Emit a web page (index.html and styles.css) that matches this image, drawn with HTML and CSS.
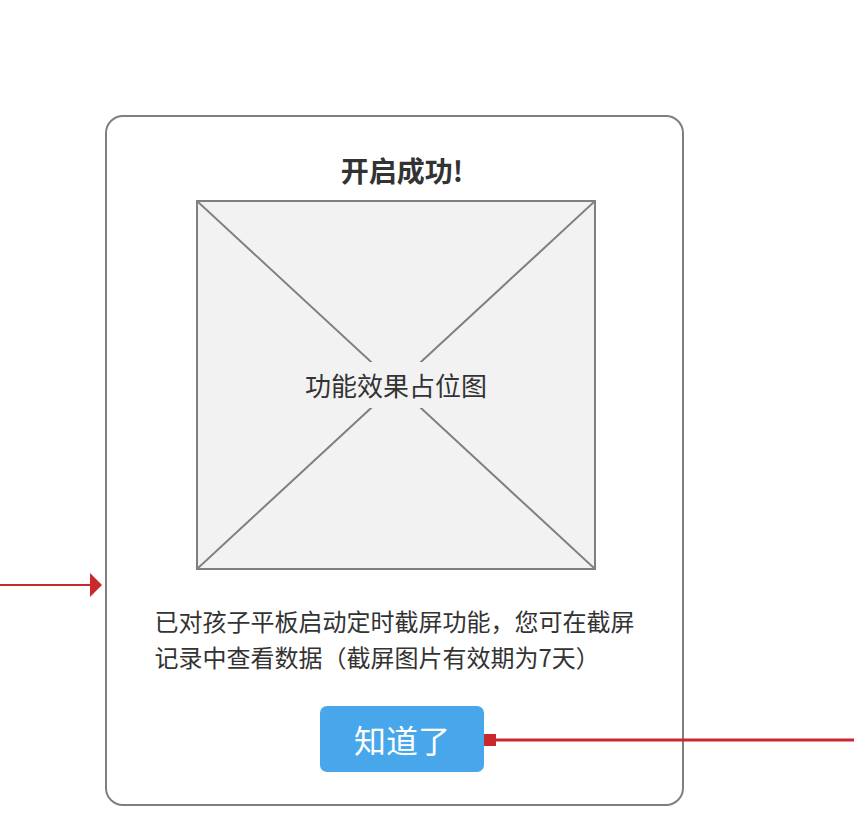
FILE: index.html
```html
<!DOCTYPE html>
<html lang="zh-CN">
<head>
<meta charset="utf-8">
<title>开启成功</title>
<link rel="stylesheet" href="styles.css">
</head>
<body>
<div class="stage">
  <div class="card">
    <h1 class="title">开启成功!</h1>
    <div class="placeholder">
      <svg class="cross" viewBox="0 0 396 366" preserveAspectRatio="none">
        <line x1="0" y1="0" x2="396" y2="366"/>
        <line x1="396" y1="0" x2="0" y2="366"/>
      </svg>
      <span class="ph-label">功能效果占位图</span>
    </div>
    <p class="desc">已对孩子平板启动定时截屏功能，您可在截屏<br>记录中查看数据（截屏图片有效期为7天）</p>
    <button class="ok-btn">知道了</button>
  </div>
  <svg class="arrow-in" width="104" height="30" viewBox="0 0 104 30">
    <line x1="0" y1="15" x2="92" y2="15"/>
    <polygon points="90,3 102,15 90,27"/>
  </svg>
  <svg class="arrow-out" width="370" height="14" viewBox="0 0 370 14">
    <rect x="0" y="1" width="12" height="12"/>
    <line x1="12" y1="7" x2="370" y2="7"/>
  </svg>
</div>
</body>
</html>
```

FILE: styles.css
```css
* { box-sizing: border-box; }
html, body {
  margin: 0;
  padding: 0;
  background: #ffffff;
  font-family: "Noto Sans CJK SC", "Noto Sans", sans-serif;
  color: #333333;
}
.stage {
  position: relative;
  width: 854px;
  height: 838px;
  padding-top: 115px;
  padding-left: 105px;
}
.card {
  width: 579px;
  height: 691px;
  border: 2px solid #7f7f7f;
  border-radius: 18px;
  display: flex;
  flex-direction: column;
  align-items: center;
  padding-top: 35px;
}
.title {
  margin: 0 0 0 15px;
  font-size: 28px;
  line-height: 36px;
  font-weight: 700;
  color: #333333;
}
.placeholder {
  position: relative;
  margin-top: 12px;
  margin-left: 3px;
  width: 400px;
  height: 370px;
  border: 2px solid #7f7f7f;
  background: #f2f2f2;
  display: flex;
  align-items: center;
  justify-content: center;
}
.cross {
  position: absolute;
  left: 0;
  top: 0;
  width: 100%;
  height: 100%;
}
.cross line {
  stroke: #7f7f7f;
  stroke-width: 2;
}
.ph-label {
  position: relative;
  background: #f2f2f2;
  font-size: 26px;
  line-height: 46px;
  color: #333333;
}
.desc {
  margin: 33px 0 0 0;
  width: 480px;
  font-size: 24px;
  line-height: 36px;
  color: #333333;
}
.ok-btn {
  margin-top: 31px;
  margin-left: 15px;
  width: 164px;
  height: 66px;
  border: none;
  border-radius: 7px;
  background: #47a7ea;
  color: #ffffff;
  font-family: "Noto Sans CJK SC", "Noto Sans", sans-serif;
  font-size: 32px;
  font-weight: 400;
  padding: 0;
}
.arrow-in {
  position: absolute;
  left: 0;
  top: 570px;
}
.arrow-in line { stroke: #c9282d; stroke-width: 2; }
.arrow-in polygon { fill: #c9282d; }
.arrow-out {
  position: absolute;
  left: 484px;
  top: 733px;
}
.arrow-out rect { fill: #c9282d; }
.arrow-out line { stroke: #c9282d; stroke-width: 3; }
```
